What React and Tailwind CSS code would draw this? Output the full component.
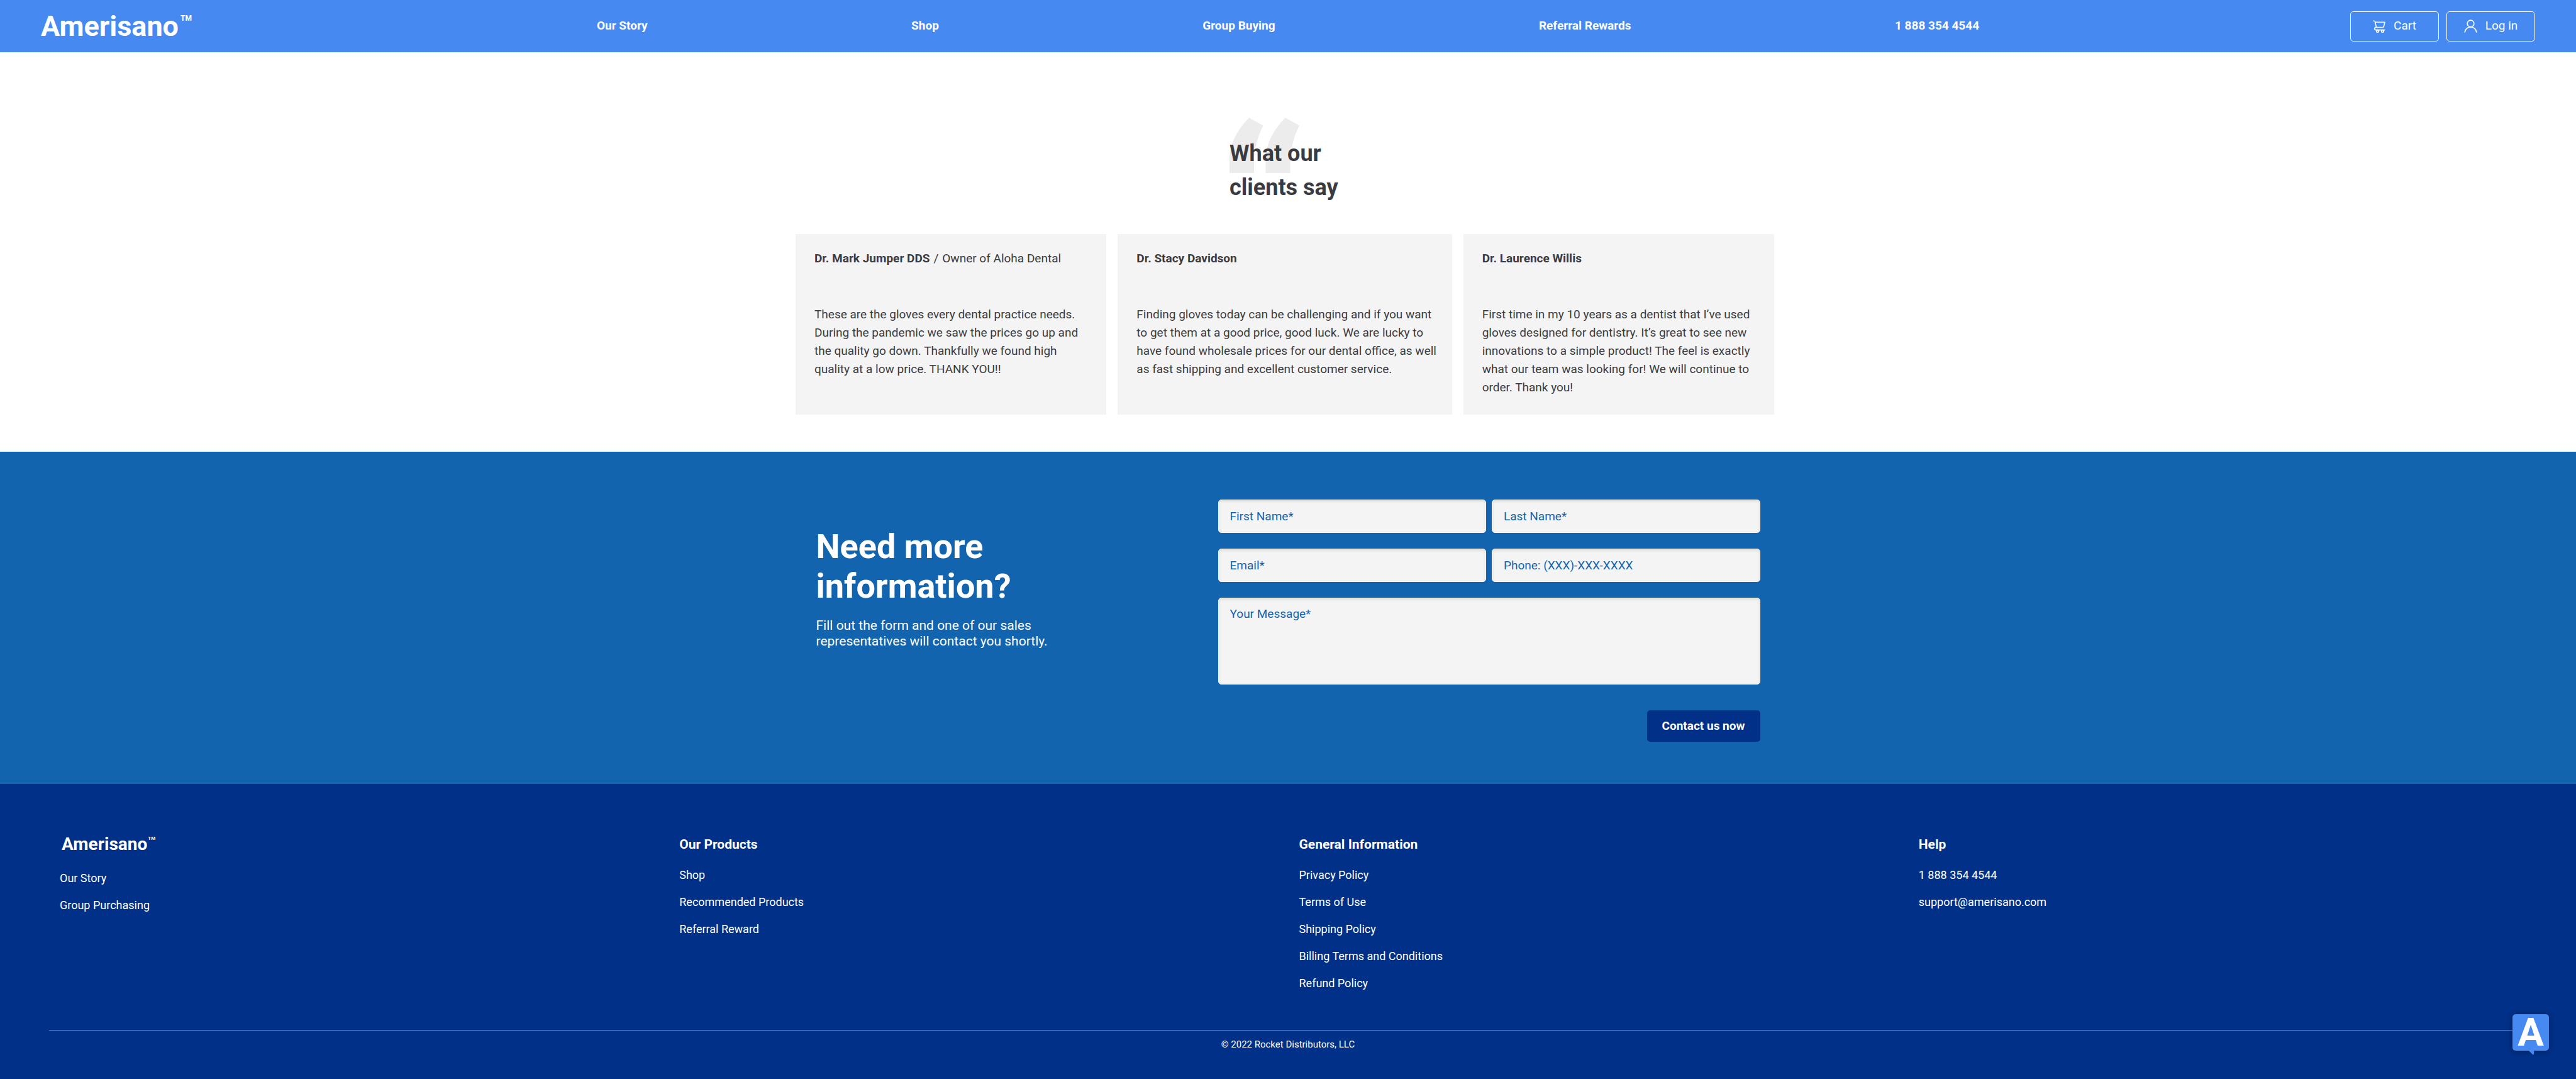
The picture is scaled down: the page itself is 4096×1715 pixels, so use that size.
const NAV_LINKS = ["Our Story", "Shop", "Group Buying", "Referral Rewards", "1 888 354 4544"];

const REVIEWS = [
  {
    name: "Dr. Mark Jumper DDS",
    role: "Owner of Aloha Dental",
    text: "These are the gloves every dental practice needs. During the pandemic we saw the prices go up and the quality go down. Thankfully we found high quality at a low price. THANK YOU!!",
  },
  {
    name: "Dr. Stacy Davidson",
    text: "Finding gloves today can be challenging and if you want to get them at a good price, good luck. We are lucky to have found wholesale prices for our dental office, as well as fast shipping and excellent customer service.",
  },
  {
    name: "Dr. Laurence Willis",
    text: "First time in my 10 years as a dentist that I’ve used gloves designed for dentistry. It’s great to see new innovations to a simple product! The feel is exactly what our team was looking for! We will continue to order. Thank you!",
  },
];

const FOOTER_COLUMNS = [
  { title: "Our Products", links: ["Shop", "Recommended Products", "Referral Reward"] },
  {
    title: "General Information",
    links: ["Privacy Policy", "Terms of Use", "Shipping Policy", "Billing Terms and Conditions", "Refund Policy"],
  },
  { title: "Help", links: ["1 888 354 4544", "support@amerisano.com"] },
];

const FIELD =
  "block w-full rounded-[5px] border border-[#f7f7f7] bg-[#f4f4f4] px-[18px] text-[19px] leading-[24px] text-[#1264ae] shadow-[inset_0_2px_4px_rgba(0,0,0,0.1)] outline-none placeholder:text-[#1264ae] placeholder:opacity-100";

function CartIcon() {
  return (
    <svg viewBox="0 0 20 20" className="size-5" fill="none" stroke="currentColor" strokeWidth="1.6" strokeLinecap="round" strokeLinejoin="round" aria-hidden="true">
      <path d="M0.8 1.2h1.1c.8 0 1.3.4 1.5 1.2L5.400 11" />
      <path d="M3.700 3.300h15.400l-2 7.400a1 1 0 0 1-1 .8H4.900c-1.400 0-2.200.9-2.200 2s.8 2.100 2.200 2.100h14" />
      <circle cx="7.600" cy="17.400" r="1.800" />
      <circle cx="15.500" cy="17.400" r="1.800" />
    </svg>
  );
}

function UserIcon() {
  return (
    <svg viewBox="0 0 21 21" className="size-[21px]" fill="none" stroke="currentColor" strokeWidth="1.7" strokeLinecap="round" aria-hidden="true">
      <circle cx="10.500" cy="6.500" r="5.300" />
      <path d="M1.200 20C2 15.300 5.700 11.800 10.500 11.800s8.500 3.500 9.300 8.200" />
    </svg>
  );
}

function Header() {
  return (
    <header className="grid h-[83px] shrink-0 grid-cols-[17fr_66fr_17fr] items-center bg-[#4589f1] px-[65px] text-[19px] text-white">
      <a href="#" className="flex items-start font-bold">
        <span className="text-[45px] leading-[50px]">Amerisano</span>
        <span className="ml-[3px] mt-[4px] text-[12px] leading-[16px]">TM</span>
      </a>
      <nav className="flex justify-around font-bold">
        {NAV_LINKS.map((label) => (
          <a key={label} href="#">{label}</a>
        ))}
      </nav>
      <div className="flex justify-end gap-3">
        <button type="button" className="flex h-12 w-[141px] items-center justify-center gap-[13px] rounded-[5px] border border-white">
          <CartIcon />
          Cart
        </button>
        <button type="button" className="flex h-12 w-[141px] items-center justify-center gap-[13px] rounded-[5px] border border-white">
          <UserIcon />
          Log in
        </button>
      </div>
    </header>
  );
}

function Reviews() {
  return (
    <section className="bg-white pb-[59px] pr-[10px] pt-[134px] text-[#3a3b40]">
      <div className="relative mx-auto w-[176px]">
        <svg viewBox="0 0 111 88" className="absolute -top-[30px] left-0 w-[111px]" fill="#ececec" aria-hidden="true">
          <path d="M0 88V66C0 40 14 18 31 0L53.500 12.600C44 32 39 52 39 72V88Z" />
          <path d="M57.500 88V66C57.500 40 71.500 18 88.500 0L111 12.600C101.500 32 96.500 52 96.500 72V88Z" />
        </svg>
        <h2 className="relative text-[36px] font-bold leading-[54px]">What our clients say</h2>
      </div>
      <div className="mx-auto mt-[47px] grid w-[1556px] max-w-full grid-cols-[494fr_531fr_494fr] gap-[18px]">
        {REVIEWS.map((r) => (
          <article key={r.name} className="bg-[#f4f4f4] pb-[29px] pl-[30px] pr-[20px] pt-6 text-[19px] leading-[29px]">
            <h3>
              <span className="font-bold">{r.name}</span>
              {r.role && (
                <>
                  <span className="mx-[6px]">/</span>
                  {r.role}
                </>
              )}
            </h3>
            <p className="mt-[60px]">{r.text}</p>
          </article>
        ))}
      </div>
    </section>
  );
}

function Contact() {
  return (
    <section className="bg-[#1264ae] pb-[67px] pt-[76px] text-white">
      <div className="mx-auto flex w-[1501px] max-w-full items-start justify-between">
        <div className="w-[400px] pt-[43px]">
          <h2 className="text-[54px] font-bold leading-[63px]">Need more information?</h2>
          <p className="mt-[19px] text-[21px] leading-[25px]">Fill out the form and one of our sales representatives will contact you shortly.</p>
        </div>
        <form className="grid w-[862px] grid-cols-2 gap-x-[9px] gap-y-[25px]">
          <input aria-label="First Name" placeholder="First Name*" className={FIELD + " h-[53px]"} />
          <input aria-label="Last Name" placeholder="Last Name*" className={FIELD + " h-[53px]"} />
          <input type="email" aria-label="Email" placeholder="Email*" className={FIELD + " h-[53px]"} />
          <input type="tel" aria-label="Phone" placeholder="Phone: (XXX)-XXX-XXXX" className={FIELD + " h-[53px]"} />
          <textarea aria-label="Your Message" placeholder="Your Message*" className={FIELD + " col-span-2 h-[138px] resize-none pt-[13px]"} />
          <button type="button" className="col-span-2 mt-4 h-[50px] w-[180px] justify-self-end rounded-[5px] bg-[#003087] text-[19px] font-bold">
            Contact us now
          </button>
        </form>
      </div>
    </section>
  );
}

function LinkList({ links }) {
  return (
    <ul className="leading-[43px]">
      {links.map((label) => (
        <li key={label}>
          <a href="#">{label}</a>
        </li>
      ))}
    </ul>
  );
}

function Footer() {
  return (
    <footer className="grow bg-[#003087] pt-[83px] text-[18px] text-white">
      <div className="grid grid-cols-4 pl-[95px] pr-[60px]">
        <div>
          <a href="#" className="ml-[3px] flex items-start font-bold">
            <span className="text-[28px] leading-[26px]">Amerisano</span>
            <span className="ml-px text-[8px] leading-[8px]">TM</span>
          </a>
          <div className="mt-[19px]">
            <LinkList links={["Our Story", "Group Purchasing"]} />
          </div>
        </div>
        {FOOTER_COLUMNS.map((col) => (
          <div key={col.title}>
            <h3 className="mb-[14px] text-[21px] font-bold leading-[26px]">{col.title}</h3>
            <LinkList links={col.links} />
          </div>
        ))}
      </div>
      <div className="mx-[78px] mt-[53px] border-t border-[#6785b9] pt-[12px] text-center text-[15px] leading-[20px]">
        © 2022 Rocket Distributors, LLC
      </div>
    </footer>
  );
}

function ChatButton() {
  return (
    <button
      type="button"
      aria-label="Chat"
      className="fixed bottom-[45px] right-[43px] size-[58px] rounded-[5px] bg-[#4589f1] text-[62px] font-bold leading-[58px] text-white shadow-[0_1px_8px_rgba(0,0,0,0.35)]"
    >
      A
      <svg viewBox="0 0 9 7" className="absolute left-[26px] top-full w-[9px]" fill="#4589f1" aria-hidden="true">
        <path d="M0 0H8.400L7.800 5.400Q7.200 7 5.800 5.800Z" />
      </svg>
    </button>
  );
}

export default function App() {
  return (
    <div className="flex min-h-screen flex-col font-[Roboto,sans-serif]">
      <Header />
      <Reviews />
      <Contact />
      <Footer />
      <ChatButton />
    </div>
  );
}
